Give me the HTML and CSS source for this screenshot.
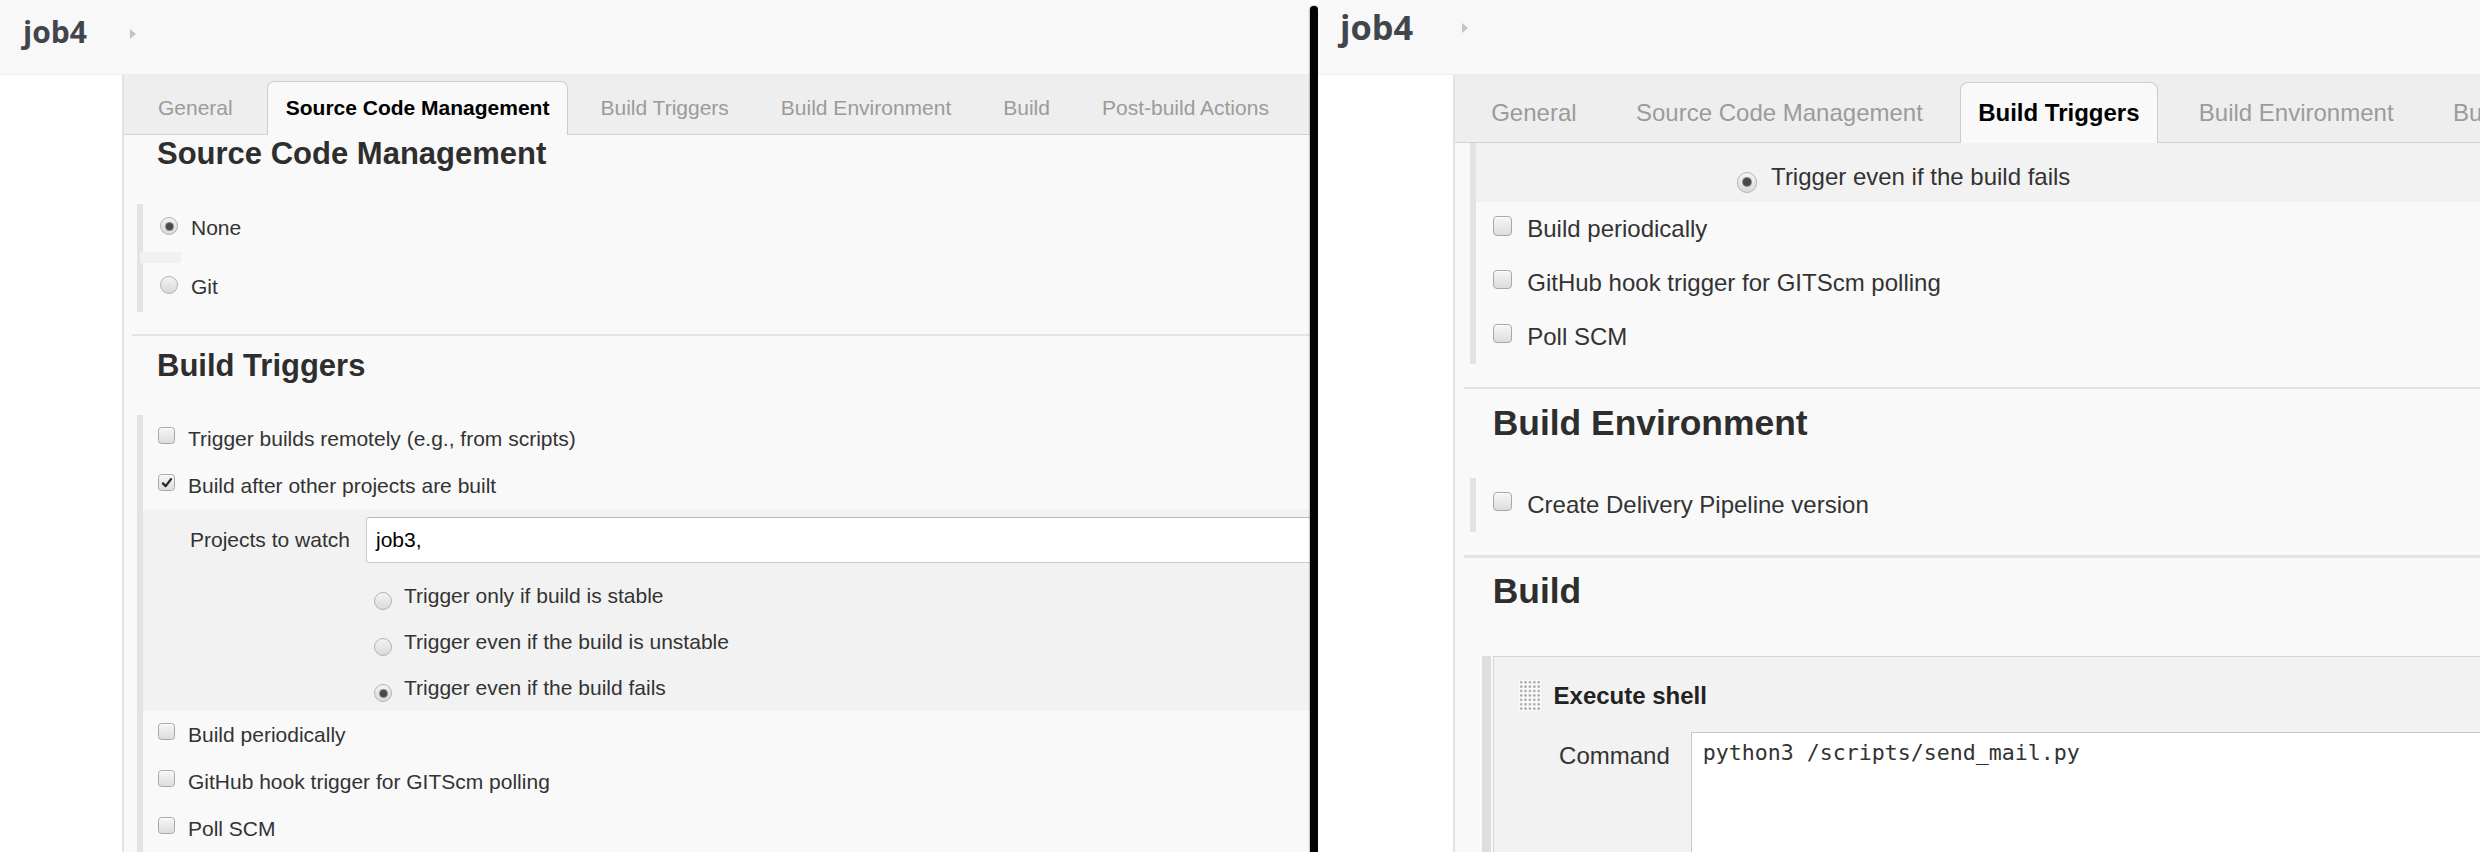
FILE: index.html
```html
<!DOCTYPE html>
<html lang="en">
<head>
<meta charset="utf-8">
<title>job4 config</title>
<link rel="stylesheet" href="styles.css">
</head>
<body>
<div class="split">

  <section class="panel panel-left">
    <header class="topbar"><span class="job">job4</span><span class="crumb-arrow"></span></header>
    <div class="body">
      <aside class="gutter"></aside>
      <main class="main">
        <nav class="tabs">
          <span class="tab">General</span>
          <span class="tab active">Source Code Management</span>
          <span class="tab">Build Triggers</span>
          <span class="tab">Build Environment</span>
          <span class="tab">Build</span>
          <span class="tab">Post-build Actions</span>
        </nav>
        <div class="content">
          <h2 class="section-title first">Source Code Management</h2>
          <div class="group scm">
            <div class="row row-scm"><span class="rb on"></span><span class="lbl">None</span></div>
            <div class="spacer"></div>
            <div class="row row-scm"><span class="rb"></span><span class="lbl">Git</span></div>
          </div>
          <div class="sep"></div>
          <h2 class="section-title">Build Triggers</h2>
          <div class="group">
            <div class="row"><span class="cb"></span><span class="lbl">Trigger builds remotely (e.g., from scripts)</span></div>
            <div class="row"><span class="cb"><svg viewBox="0 0 16 16"><path d="M3.4 8.4 6.5 11.6 12.6 3.6" fill="none" stroke="#262626" stroke-width="2.6" stroke-linecap="round" stroke-linejoin="round"/></svg></span><span class="lbl">Build after other projects are built</span></div>
            <div class="nested">
              <div class="field"><span class="field-name">Projects to watch</span><div class="text-input">job3,</div></div>
              <div class="sub-row"><span class="rb"></span><span class="lbl">Trigger only if build is stable</span></div>
              <div class="sub-row"><span class="rb"></span><span class="lbl">Trigger even if the build is unstable</span></div>
              <div class="sub-row"><span class="rb on"></span><span class="lbl">Trigger even if the build fails</span></div>
            </div>
            <div class="row"><span class="cb"></span><span class="lbl">Build periodically</span></div>
            <div class="row"><span class="cb"></span><span class="lbl">GitHub hook trigger for GITScm polling</span></div>
            <div class="row"><span class="cb"></span><span class="lbl">Poll SCM</span></div>
          </div>
        </div>
      </main>
    </div>
  </section>

  <div class="split-line"></div>

  <section class="panel panel-right">
    <header class="topbar"><span class="job">job4</span><span class="crumb-arrow"></span></header>
    <div class="body">
      <aside class="gutter"></aside>
      <main class="main">
        <nav class="tabs">
          <span class="tab">General</span>
          <span class="tab">Source Code Management</span>
          <span class="tab active">Build Triggers</span>
          <span class="tab">Build Environment</span>
          <span class="tab">Build</span>
          <span class="tab">Post-build Actions</span>
        </nav>
        <div class="content">
          <div class="group top">
            <div class="nested partial">
              <div class="sub-row"><span class="rb on"></span><span class="lbl">Trigger even if the build fails</span></div>
            </div>
            <div class="row"><span class="cb"></span><span class="lbl">Build periodically</span></div>
            <div class="row"><span class="cb"></span><span class="lbl">GitHub hook trigger for GITScm polling</span></div>
            <div class="row"><span class="cb"></span><span class="lbl">Poll SCM</span></div>
          </div>
          <div class="sep"></div>
          <h2 class="section-title">Build Environment</h2>
          <div class="group">
            <div class="row"><span class="cb"></span><span class="lbl">Create Delivery Pipeline version</span></div>
          </div>
          <div class="sep"></div>
          <h2 class="section-title">Build</h2>
          <div class="repeated">
            <div class="exec">
              <div class="exec-head"><span class="grip"></span><span class="exec-title">Execute shell</span></div>
              <div class="cmd-row">
                <span class="cmd-label">Command</span>
                <div class="code-area">python3 /scripts/send_mail.py</div>
              </div>
            </div>
          </div>
        </div>
      </main>
    </div>
  </section>

</div>
</body>
</html>
```

FILE: styles.css
```css
* { box-sizing: border-box; }

html, body {
  margin: 0;
  padding: 0;
  width: 2480px;
  height: 852px;
  overflow: hidden;
  background: #fff;
}

body {
  font-family: "Liberation Sans", Arial, sans-serif;
  color: #333;
}

.split {
  display: flex;
  width: 2480px;
  height: 852px;
  overflow: hidden;
}

.panel {
  --u: 1px;
  display: flex;
  flex-direction: column;
  height: 100%;
  overflow: hidden;
  font-size: calc(21 * var(--u));
}

.panel-left {
  flex: 0 0 1310px;
  --head-top: 17px;
  --head-left: 23px;
  --gutter: 124px;
  --tabs-pad: 8px;
  --active-pad: 18px;
  --active-ml: 8px;
  --active-mr: 6px;
  --sep-gap: 22px;
  --group-gap: 31px;
  --sub-indent: 231px;
}

.panel-right {
  flex: 1 1 auto;
  min-width: 0;
  --u: 1.143px;
  --head-top: 9.6px;
  --head-left: 22px;
  --gutter: 137px;
  --tabs-pad: 6.5px;
  --active-pad: 17px;
  --active-ml: 7.6px;
  --active-mr: 11.6px;
  --sep-gap: 23.5px;
  --group-gap: 34px;
  --sub-indent: 261px;
}

.split-line {
  flex: 0 0 8px;
  margin-top: 6px;
  background: #030303;
  border-radius: 4px 4px 0 0;
  box-shadow: 0 0 2px rgba(0, 0, 0, 0.7);
}

/* header */
.topbar {
  flex: 0 0 75px;
  display: flex;
  align-items: flex-start;
  padding: var(--head-top) 0 0 var(--head-left);
  background: #f8f8f8;
  border-bottom: 1px solid #eceef0;
}

.job {
  font-family: "Open Sans", "Noto Sans", sans-serif;
  font-weight: 700;
  font-size: calc(30 * var(--u));
  line-height: 1;
  color: #41464d;
}

.crumb-arrow {
  width: 0;
  height: 0;
  margin: calc(11.5 * var(--u)) 0 0 calc(43 * var(--u));
  border-left: calc(6 * var(--u)) solid #c4c4c4;
  border-top: calc(5 * var(--u)) solid transparent;
  border-bottom: calc(5 * var(--u)) solid transparent;
}

/* body */
.body {
  flex: 1;
  display: flex;
  min-height: 0;
}

.gutter {
  flex: 0 0 var(--gutter);
  background: #fff;
  border-right: 2px solid #e3e3e3;
}

.main {
  flex: 1;
  min-width: 0;
  display: flex;
  flex-direction: column;
}

/* tabs */
.tabs {
  flex: 0 0 auto;
  height: calc(59 * var(--u) + 1px);
  display: flex;
  align-items: flex-end;
  padding-left: var(--tabs-pad);
  background: #eeeeee;
  border-bottom: 1px solid #d3d3d3;
  white-space: nowrap;
}

.tab {
  flex-shrink: 0;
  height: calc(54 * var(--u));
  margin-bottom: -1px;
  line-height: calc(54 * var(--u));
  padding: 0 calc(26 * var(--u));
  color: #9b9b9b;
}

.tab.active {
  margin: 0 var(--active-mr) -1px var(--active-ml);
  padding: 0 var(--active-pad);
  line-height: calc(52 * var(--u));
  background: #f9f9f9;
  border: 1px solid #cdcdcd;
  border-bottom: 0;
  border-radius: calc(7 * var(--u)) calc(7 * var(--u)) 0 0;
  color: #000;
  font-weight: bold;
}

/* content */
.content {
  flex: 1;
  min-height: 0;
  background: #f9f9f9;
}

.section-title {
  margin: calc(12 * var(--u)) 0 0 calc(33 * var(--u));
  font-size: calc(31 * var(--u));
  line-height: calc(36 * var(--u));
  font-weight: bold;
  color: #2e2e2e;
}

.section-title.first {
  margin-top: calc(1 * var(--u));
}

.group {
  margin: var(--group-gap) 0 0 calc(13 * var(--u));
  border-left: calc(6 * var(--u)) solid #e3e3e3;
}

.group.scm {
  margin-top: calc(32 * var(--u));
  padding-bottom: calc(1 * var(--u));
}

.group.top {
  margin-top: 0;
}

.sep {
  height: calc(2 * var(--u));
  margin: var(--sep-gap) 0 0 calc(8 * var(--u));
  background: #e4e4e4;
}

.row {
  display: flex;
  align-items: center;
  height: calc(47 * var(--u));
  padding-left: calc(15 * var(--u));
  white-space: nowrap;
}

.row-scm {
  height: calc(48 * var(--u));
  padding-left: calc(17 * var(--u));
}

.spacer {
  width: calc(41 * var(--u));
  height: calc(11 * var(--u));
  margin-left: calc(-3 * var(--u));
  background: #f1f1f1;
}

.lbl {
  color: #333;
}

/* checkbox */
.cb {
  flex-shrink: 0;
  display: flex;
  align-items: center;
  justify-content: center;
  width: calc(17 * var(--u));
  height: calc(17 * var(--u));
  margin: 0 calc(13 * var(--u)) calc(6 * var(--u)) 0;
  border: 1px solid #a8a8a8;
  border-radius: calc(3.5 * var(--u));
  background: linear-gradient(#f6f6f6, #dddddd);
  box-shadow: inset 0 1px 0 #fff;
}

.cb svg {
  width: calc(14 * var(--u));
  height: calc(14 * var(--u));
}

/* radio */
.rb {
  flex-shrink: 0;
  display: flex;
  align-items: center;
  justify-content: center;
  width: calc(18 * var(--u));
  height: calc(18 * var(--u));
  border-radius: 50%;
  border: 1px solid #b3b3b3;
  background: linear-gradient(#f4f4f4, #d9d9d9);
}

.rb.on::after {
  content: "";
  width: calc(7 * var(--u));
  height: calc(7 * var(--u));
  border-radius: 50%;
  background: #4a4a4a;
  box-shadow: 0 0 0 1px #8a8a8a;
}

.row-scm .rb {
  margin: 0 calc(13 * var(--u)) calc(4 * var(--u)) 0;
}

/* nested optional block */
.nested {
  background: #f2f2f2;
  padding-top: calc(8 * var(--u));
}

.nested.partial {
  padding-top: calc(6.6 * var(--u));
}

.field {
  display: flex;
  align-items: center;
  height: calc(46 * var(--u));
  margin-bottom: calc(10 * var(--u));
}

.field-name {
  flex-shrink: 0;
  width: calc(223 * var(--u));
  padding-left: calc(47 * var(--u));
  color: #333;
}

.text-input {
  flex: 1;
  height: 100%;
  display: flex;
  align-items: center;
  margin-right: -20px;
  padding-left: calc(9 * var(--u));
  background: #fff;
  border: 1px solid #cbcbcb;
  border-top-color: #b9b9b9;
  border-radius: calc(3 * var(--u)) 0 0 calc(3 * var(--u));
  color: #000;
}

.sub-row {
  display: flex;
  align-items: center;
  height: calc(46 * var(--u));
  padding-left: var(--sub-indent);
  white-space: nowrap;
}

.partial .sub-row {
  height: calc(45 * var(--u));
}

.sub-row .rb {
  margin: calc(10 * var(--u)) calc(12 * var(--u)) 0 0;
}

/* build step */
.repeated {
  margin: calc(38.3 * var(--u)) 0 0 calc(23.6 * var(--u));
  border-left: calc(8.6 * var(--u)) solid #dedede;
  padding-left: calc(1.4 * var(--u));
}

.exec {
  background: #f2f2f2;
  border-top: 1px solid #d3d3d3;
  border-left: 1px solid #d3d3d3;
  padding-top: calc(20.1 * var(--u));
}

.exec-head {
  display: flex;
  align-items: center;
  padding-left: calc(21.9 * var(--u));
}

.grip {
  flex-shrink: 0;
  width: calc(19.2 * var(--u));
  height: calc(27 * var(--u));
  background-color: #fbfbfb;
  background-image: radial-gradient(circle, #a9a9a9 1px, transparent 1.5px);
  background-size: calc(3.84 * var(--u)) calc(3.86 * var(--u));
}

.exec-title {
  margin-left: calc(11.4 * var(--u));
  font-weight: bold;
  color: #222;
}

.cmd-row {
  display: flex;
  align-items: flex-start;
  margin-top: calc(18.2 * var(--u));
}

.cmd-label {
  flex-shrink: 0;
  margin: 0 calc(18.4 * var(--u)) 0 calc(57.3 * var(--u));
  padding-top: calc(8.75 * var(--u));
  color: #333;
}

.code-area {
  flex: 1;
  height: calc(200 * var(--u));
  margin-right: -20px;
  padding: calc(5.8 * var(--u)) calc(9.6 * var(--u));
  background: #fff;
  border: 1px solid #c9c9c9;
  font-family: "DejaVu Sans Mono", "Liberation Mono", monospace;
  font-size: calc(18.9 * var(--u));
  line-height: 1.2;
  color: #333;
  white-space: pre;
}
```
